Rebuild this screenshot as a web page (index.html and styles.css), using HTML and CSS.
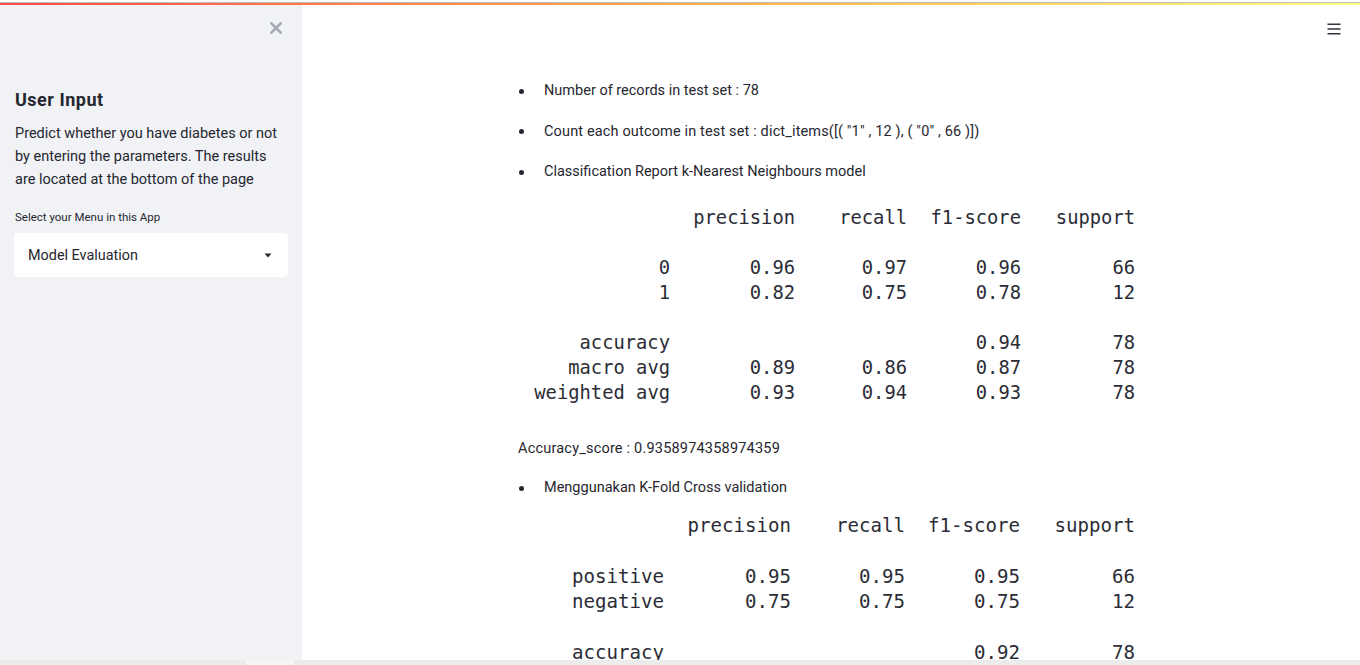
FILE: index.html
```html
<!DOCTYPE html>
<html lang="en">
<head>
<meta charset="utf-8">
<title>Diabetes Prediction</title>
<link rel="stylesheet" href="styles.css">
</head>
<body>
<div class="decoration"></div>
<div class="app">
  <aside class="sidebar">
    <div class="close-row">
      <svg class="close-icon" width="12" height="12" viewBox="0 0 12 12"><path d="M1.5 1.5 L10.5 10.5 M10.5 1.5 L1.5 10.5" stroke="#a3a8b4" stroke-width="2.6" stroke-linecap="square"/></svg>
    </div>
    <h2 class="side-title">User Input</h2>
    <p class="side-text">Predict whether you have diabetes or not by entering the parameters. The results are located at the bottom of the page</p>
    <label class="side-label">Select your Menu in this App</label>
    <div class="select">
      <span>Model Evaluation</span>
      <svg class="caret" width="8" height="5" viewBox="0 0 8 5"><path d="M0.5 0.5 L7.5 0.5 L4 4.5 Z" fill="#262730"/></svg>
    </div>
  </aside>
  <main class="main">
    <header class="main-header">
      <svg class="menu-icon" width="14" height="12" viewBox="0 0 14 12"><path d="M0.5 1.25 H13.5 M0.5 6 H13.5 M0.5 10.75 H13.5" stroke="#31333f" stroke-width="1.5"/></svg>
    </header>
    <div class="content">
      <ul class="list">
        <li><span class="dot"></span><span>Number of records in test set : 78</span></li>
        <li><span class="dot"></span><span class="wide">Count each outcome in test set : dict_items([( "1" , 12 ), ( "0" , 66 )])</span></li>
        <li><span class="dot"></span><span>Classification Report k-Nearest Neighbours model</span></li>
      </ul>
      <div class="report report-knn">
        <span></span><span>precision</span><span>recall</span><span>f1-score</span><span>support</span>
        <div class="blank"></div>
        <span>0</span><span>0.96</span><span>0.97</span><span>0.96</span><span>66</span>
        <span>1</span><span>0.82</span><span>0.75</span><span>0.78</span><span>12</span>
        <div class="blank"></div>
        <span>accuracy</span><span></span><span></span><span>0.94</span><span>78</span>
        <span>macro avg</span><span>0.89</span><span>0.86</span><span>0.87</span><span>78</span>
        <span>weighted avg</span><span>0.93</span><span>0.94</span><span>0.93</span><span>78</span>
      </div>
      <p class="score">Accuracy_score : 0.9358974358974359</p>
      <ul class="list list-kfold">
        <li><span class="dot"></span><span>Menggunakan K-Fold Cross validation</span></li>
      </ul>
      <div class="report report-kfold">
        <span></span><span>precision</span><span>recall</span><span>f1-score</span><span>support</span>
        <div class="blank"></div>
        <span>positive</span><span>0.95</span><span>0.95</span><span>0.95</span><span>66</span>
        <span>negative</span><span>0.75</span><span>0.75</span><span>0.75</span><span>12</span>
        <div class="blank"></div>
        <span>accuracy</span><span></span><span></span><span>0.92</span><span>78</span>
      </div>
    </div>
  </main>
</div>
<div class="hscroll"><div class="hscroll-thumb"></div></div>
</body>
</html>
```

FILE: styles.css
```css
html, body {
  margin: 0;
  padding: 0;
  background: #ffffff;
}
body {
  height: 665px;
  overflow: hidden;
  font-family: Roboto, "Liberation Sans", sans-serif;
  color: #262730;
  display: flex;
  flex-direction: column;
}
.decoration {
  margin-top: 2px;
  height: 2px;
  border-top: 1px solid #bfbfbf;
  background: linear-gradient(90deg, #ff4b4b 0%, #ffbd45 60%, #fffd80 100%);
  flex: none;
}
.app {
  flex: 1;
  display: flex;
  min-height: 0;
}
.sidebar {
  width: 302px;
  flex: none;
  box-sizing: border-box;
  background: #f0f2f6;
  padding: 0 14px 0 15px;
  display: flex;
  flex-direction: column;
}
.close-row {
  height: 46px;
  display: flex;
  justify-content: flex-end;
  align-items: flex-start;
}
.close-icon {
  margin-top: 17px;
  margin-right: 6px;
}
.side-title {
  margin: 37px 0 0;
  font-size: 18px;
  letter-spacing: 0.5px;
  line-height: 24px;
  font-weight: 700;
}
.side-text {
  margin: 9.5px 0 0;
  font-size: 14.5px;
  line-height: 23px;
}
.side-label {
  margin-top: 18.5px;
  font-size: 11.5px;
  line-height: 16px;
}
.select {
  margin-top: 8px;
  margin-left: -1px;
  height: 44px;
  background: #ffffff;
  border-radius: 4px;
  display: flex;
  align-items: center;
  justify-content: space-between;
  padding: 0 16px 0 14px;
  font-size: 14.4px;
}
.caret {
  margin-top: 1px;
}
.main {
  flex: 1;
  display: flex;
  flex-direction: column;
  min-width: 0;
}
.main-header {
  height: 46px;
  display: flex;
  justify-content: flex-end;
  align-items: flex-start;
  flex: none;
}
.menu-icon {
  margin-top: 18px;
  margin-right: 19px;
}
.content {
  padding-left: 216px;
  padding-top: 30px;
  font-size: 14.5px;
}
.list {
  list-style: none;
  margin: 0;
  padding: 0;
}
.list li {
  display: flex;
  align-items: center;
  height: 20px;
  line-height: 20px;
  margin-bottom: 20.5px;
  white-space: nowrap;
}
.list li:last-child {
  margin-bottom: 0;
}
.wide {
  letter-spacing: 0.15px;
}
.dot {
  width: 5px;
  height: 5px;
  border-radius: 50%;
  background: #262730;
  margin-left: 1px;
  margin-right: 20px;
  flex: none;
}
.report {
  display: grid;
  justify-items: end;
  font-family: "DejaVu Sans Mono", "Liberation Mono", monospace;
  color: #2b2c36;
  white-space: pre;
}
.report .blank {
  grid-column: 1 / -1;
}
.report-knn {
  margin-top: 22.5px;
  grid-template-columns: 152px 125px 112px 114px 114px;
  grid-auto-rows: 25px;
  line-height: 25px;
  font-size: 18.8px;
}
.report-kfold {
  margin-top: 15.3px;
  grid-template-columns: 146px 127px 114px 115px 115px;
  grid-auto-rows: 25.33px;
  line-height: 25.33px;
  font-size: 19.1px;
}
.score {
  margin: 34.5px 0 0;
  line-height: 20px;
  letter-spacing: 0.2px;
}
.list-kfold {
  margin-top: 19px;
}
.hscroll {
  height: 5px;
  flex: none;
  background: #ececec;
  display: flex;
}
.hscroll-thumb {
  margin-left: 246px;
  width: 48px;
  background: #f4f5f5;
}
```
